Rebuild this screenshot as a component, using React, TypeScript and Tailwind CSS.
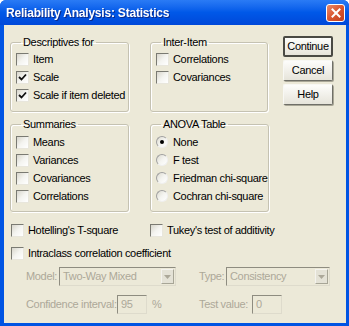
import React from "react";

function Check({ checked = false }: { checked?: boolean }) {
  return (
    <span className="relative inline-block w-[13px] h-[13px] shrink-0 border border-t-[#7a7a72] border-l-[#7a7a72] border-r-[#e8e6dc] border-b-[#e8e6dc] bg-gradient-to-br from-[#d8d6cc] via-[#f4f4f0] to-white">
      {checked && (
        <svg width="11" height="11" viewBox="0 0 11 11" className="absolute left-0 top-0">
          <path d="M2 5 L4.5 7.5 L9 2.5" stroke="#111" strokeWidth="1.8" fill="none" />
        </svg>
      )}
    </span>
  );
}

function Radio({ checked = false }: { checked?: boolean }) {
  return (
    <span className="relative inline-flex items-center justify-center w-[12px] h-[12px] shrink-0 rounded-full border border-t-[#a0a0a0] border-l-[#a0a0a0] border-r-[#f0f0f0] border-b-[#f0f0f0] bg-gradient-to-br from-[#dcdad0] via-[#f4f4f0] to-white">
      {checked && <span className="w-[4px] h-[4px] rounded-full bg-black" />}
    </span>
  );
}

function CheckRow({ label, checked }: { label: string; checked?: boolean }) {
  return (
    <div className="h-[18px] flex items-center gap-[4px] whitespace-nowrap">
      <Check checked={checked} />
      <span>{label}</span>
    </div>
  );
}

function RadioRow({ label, checked }: { label: string; checked?: boolean }) {
  return (
    <div className="h-[18px] flex items-center gap-[5px] whitespace-nowrap">
      <Radio checked={checked} />
      <span>{label}</span>
    </div>
  );
}

function Group({ title, w, h, children }: { title: string; w: string; h: string; children: React.ReactNode }) {
  return (
    <fieldset className={`${w} ${h} border border-[#c5c2b2] rounded-[3px] pl-[5px] shadow-[inset_1px_1px_0_#fff,1px_1px_0_#fff]`}>
      <legend className="ml-[5px] px-[2px] leading-[13px] whitespace-nowrap">{title}</legend>
      <div className="pt-[1px]">{children}</div>
    </fieldset>
  );
}

function Btn({ label, def }: { label: string; def?: boolean }) {
  return (
    <div
      className={`h-[21px] w-[50px] flex items-center justify-center rounded-[2px] bg-gradient-to-b from-[#fdfdfb] to-[#e6e4da] ${
        def
          ? "border-2 border-[#4a4a44]"
          : "border border-t-[#f8f8f4] border-l-[#f8f8f4] border-r-[#6f6f68] border-b-[#6f6f68] shadow-[1px_1px_0_#a9a797]"
      }`}
    >
      {label}
    </div>
  );
}

function Combo({ w, value }: { w: string; value: string }) {
  return (
    <div className={`${w} h-[19px] flex items-center border border-t-[#8e8c80] border-l-[#8e8c80] border-r-[#dedbcc] border-b-[#dedbcc] bg-[#ece9d8]`}>
      <span className="flex-1 pl-[3px] text-[#aca899] leading-none whitespace-nowrap">{value}</span>
      <span className="w-[13px] h-[15px] mr-[1px] flex items-center justify-center border border-t-[#f4f3ee] border-l-[#f4f3ee] border-r-[#a7a596] border-b-[#a7a596] bg-[#e4e2d6]">
        <svg width="7" height="4" viewBox="0 0 7 4">
          <path d="M0 0 H7 L3.5 4 Z" fill="#aca899" />
        </svg>
      </span>
    </div>
  );
}

function Field({ w, value }: { w: string; value: string }) {
  return (
    <div className={`${w} h-[19px] flex items-center border border-t-[#8e8c80] border-l-[#8e8c80] border-r-[#dedbcc] border-b-[#dedbcc] bg-[#ece9d8]`}>
      <span className="pl-[3px] text-[#aca899] leading-none">{value}</span>
    </div>
  );
}

export default function App() {
  return (
    <div className="w-[349px] h-[326px] bg-[#0054e3] flex flex-col rounded-t-[6px] overflow-hidden font-['Liberation_Sans',Arial,sans-serif] text-[11px] text-black">
      <div className="h-[25px] shrink-0 flex items-center pl-[6px] pr-[4px] bg-gradient-to-b from-[#2a7bf5] via-[#0058e8] to-[#0048d9]">
        <span className="text-white font-bold text-[12px] tracking-[-0.2px] drop-shadow-[1px_1px_0_#0a2a8a]">
          Reliability Analysis: Statistics
        </span>
        <div className="ml-auto w-[19px] h-[18px] rounded-[3px] border border-white bg-gradient-to-br from-[#e88a6a] via-[#d9552f] to-[#c0401e] flex items-center justify-center">
          <svg width="10" height="10" viewBox="0 0 10 10">
            <path d="M1.5 1.5 L8.5 8.5 M8.5 1.5 L1.5 8.5" stroke="white" strokeWidth="2" strokeLinecap="square" />
          </svg>
        </div>
      </div>
      <div className="flex-1 ml-[4px] mr-[3px] mb-[3px] bg-[#ece9d8] pt-[11px] pl-[6px] tracking-[-0.33px]">
        <div className="flex">
          <Group title="Descriptives for" w="w-[119px]" h="h-[76px]">
            <CheckRow label="Item" />
            <CheckRow label="Scale" checked />
            <CheckRow label="Scale if item deleted" checked />
          </Group>
          <div className="ml-[21px]">
            <Group title="Inter-Item" w="w-[118px]" h="h-[76px]">
              <CheckRow label="Correlations" />
              <CheckRow label="Covariances" />
            </Group>
          </div>
          <div className="ml-[15px] flex flex-col gap-[3px]">
            <Btn label="Continue" def />
            <Btn label="Cancel" />
            <Btn label="Help" />
          </div>
        </div>
        <div className="flex mt-[6px]">
          <Group title="Summaries" w="w-[119px]" h="h-[94px]">
            <div className="pt-[1px]">
              <CheckRow label="Means" />
              <CheckRow label="Variances" />
              <CheckRow label="Covariances" />
              <CheckRow label="Correlations" />
            </div>
          </Group>
          <div className="ml-[21px]">
            <Group title="ANOVA Table" w="w-[118px]" h="h-[94px]">
              <div className="pt-[1px]">
                <RadioRow label="None" checked />
                <RadioRow label="F test" />
                <RadioRow label="Friedman chi-square" />
                <RadioRow label="Cochran chi-square" />
              </div>
            </Group>
          </div>
        </div>
        <div className="flex mt-[9px] pl-[1px]">
          <div className="w-[139px]">
            <CheckRow label="Hotelling's T-square" />
          </div>
          <CheckRow label="Tukey's test of additivity" />
        </div>
        <div className="mt-[5px] pl-[1px]">
          <CheckRow label="Intraclass correlation coefficient" />
        </div>
        <div className="flex items-center mt-[5px] pl-[16px] text-[#aca899] whitespace-nowrap">
          <div className="w-[173px] flex items-center">
            <span className="w-[33px]">Model:</span>
            <Combo w="w-[117px]" value="Two-Way Mixed" />
          </div>
          <span className="w-[27px]">Type:</span>
          <Combo w="w-[104px]" value="Consistency" />
        </div>
        <div className="flex items-center mt-[9px] pl-[16px] text-[#aca899] whitespace-nowrap">
          <div className="w-[173px] flex items-center">
            <span className="w-[91px]">Confidence interval:</span>
            <Field w="w-[30px]" value="95" />
            <span className="ml-[5px]">%</span>
          </div>
          <span className="w-[53px]">Test value:</span>
          <Field w="w-[30px]" value="0" />
        </div>
      </div>
    </div>
  );
}
